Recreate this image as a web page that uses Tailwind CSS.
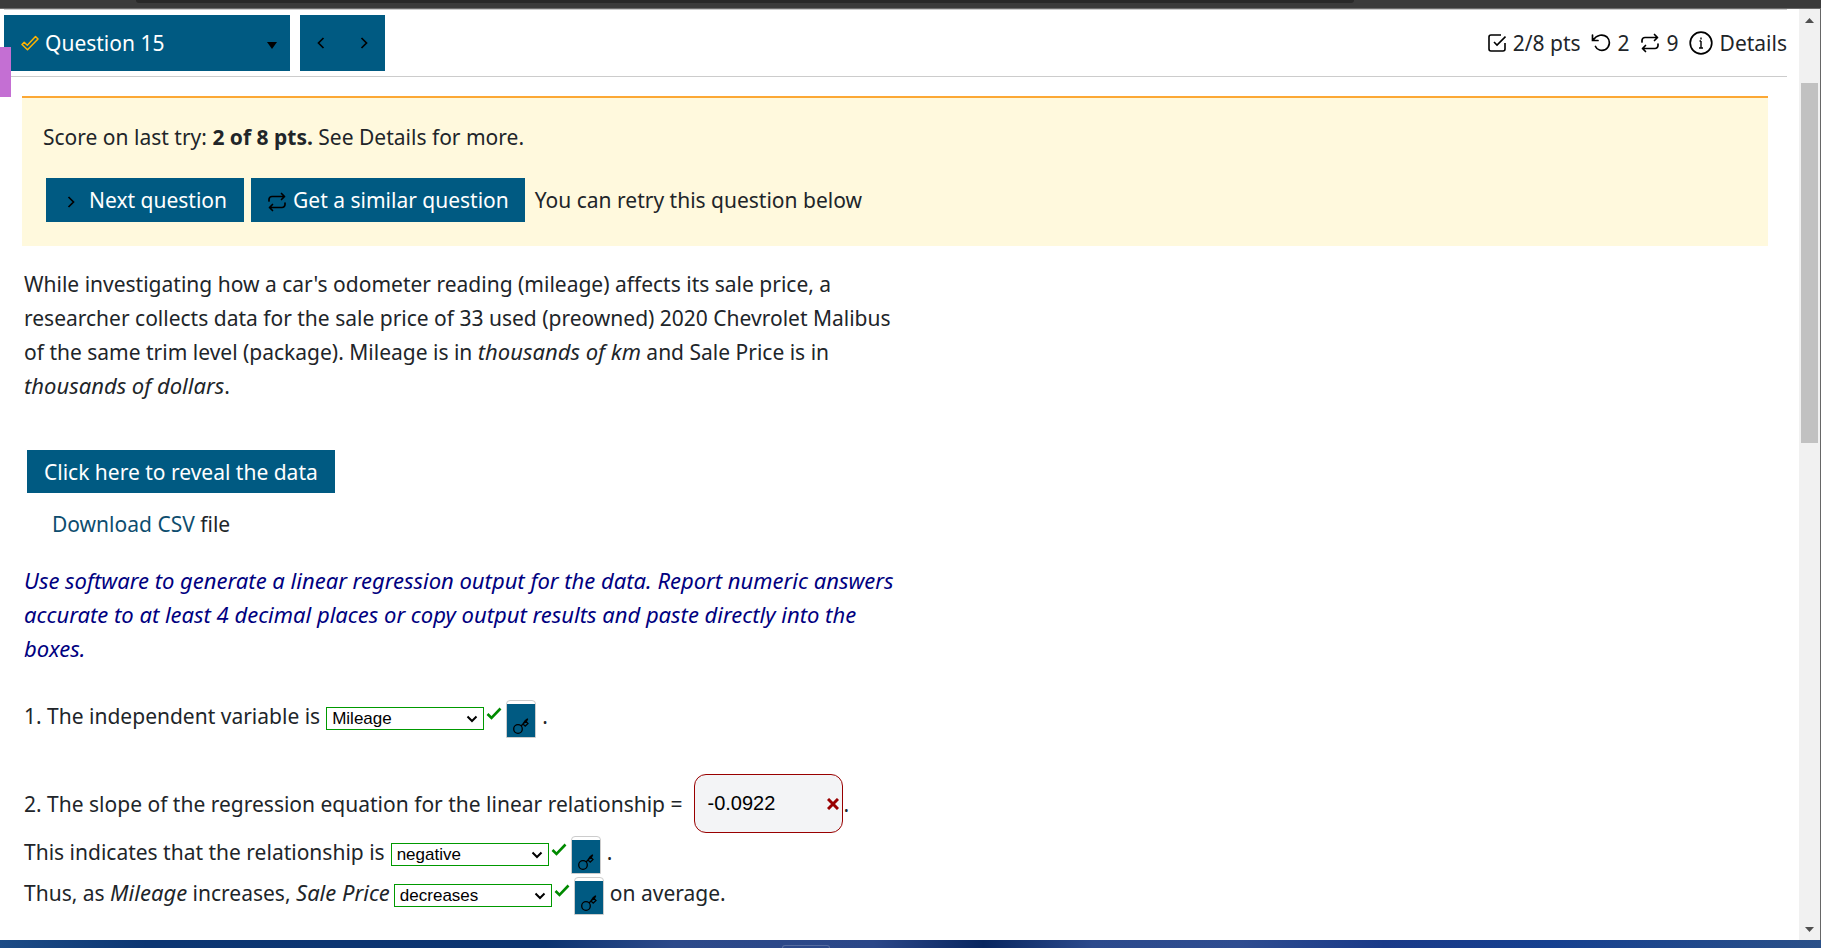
<!DOCTYPE html>
<html lang="en">
  <head>
    <meta charset="UTF-8" />
    <title>Question 15</title>
    <script src="https://cdn.jsdelivr.net/npm/@tailwindcss/browser@4"></script>
  </head>
  <body class="h-screen overflow-hidden flex flex-col bg-white text-[#212529] font-['Segoe_UI','Noto_Sans',sans-serif] text-[21px] leading-[34px]">
    <svg class="hidden">
      <symbol id="key" viewBox="0 0 18 18">
        <g fill="none" stroke="#000" stroke-width="1.3">
          <ellipse cx="6" cy="12" rx="4.300" ry="4.300" />
          <path d="M9 9 15.500 2.500M11 7l2.200 2.200 2.800-2.800-1.800-1.800 1.500-2.800-2.500 1.800z" />
        </g>
      </symbol>
      <symbol id="check" viewBox="0 0 16 14">
        <path d="M1.500 7 5.500 11 14.500 1.500" fill="none" stroke="#008a00" stroke-width="2.600" />
      </symbol>
      <symbol id="retry" viewBox="0 0 20 20">
        <g fill="none" stroke="#000" stroke-width="1.700" stroke-linecap="round" stroke-linejoin="round">
          <path d="M2 9V7.500a3 3 0 0 1 3-3h12.500M14.500 1.500l3 3-3 3" />
          <path d="M18 11v1.500a3 3 0 0 1-3 3H2.500M5.500 12.500l-3 3 3 3" />
        </g>
      </symbol>
      <symbol id="down" viewBox="0 0 12 8">
        <path d="m1.500 1.500 4.500 4.500 4.500-4.500" fill="none" stroke="#000" stroke-width="2" />
      </symbol>
    </svg>

    <div class="h-[9px] shrink-0 bg-[#3b3b3b] border-b border-[#6b6b6b]">
      <div class="ml-[136px] mr-[467px] h-[3px] rounded-b bg-[#292929]"></div>
    </div>

    <div class="flex-1 min-h-0 flex border-r border-[#666]">
      <main class="relative flex-1 min-w-0 overflow-hidden pl-1 pr-3">
        <div class="absolute left-0 top-[38px] w-[11px] h-[50px] bg-[#c46fd3]"></div>

        <header class="flex items-center h-[68px] border-y border-[#ccc] py-[3px]">
          <button class="flex items-center w-[286px] h-14 px-[17px] bg-[#005a82] text-white">
            <svg class="w-[18px] h-4" viewBox="0 0 18 16">
              <path d="M1 9.500 3.200 7.300 6.300 10.200 14.500 1.500 17 4 6.500 14.800z" fill="none" stroke="#ffb300" stroke-width="1.500" stroke-linejoin="round" />
            </svg>
            <span class="ml-[6px]">Question 15</span>
            <svg class="ml-auto -mr-1 mt-1 w-[10px] h-[7px]" viewBox="0 0 10 7"><path d="M0 0h10L5 7z" /></svg>
          </button>
          <nav class="ml-[10px] flex items-center h-14 w-[85px] px-[17px] justify-between bg-[#005a82]">
            <button aria-label="Previous question">
              <svg class="w-2 h-3" viewBox="0 0 8 12"><path d="M6.500 1 1.500 6l5 5" fill="none" stroke="#000" stroke-width="1.700" /></svg>
            </button>
            <button aria-label="Next">
              <svg class="w-2 h-3" viewBox="0 0 8 12"><path d="m1.500 1 5 5-5 5" fill="none" stroke="#000" stroke-width="1.700" /></svg>
            </button>
          </nav>
          <div class="ml-auto flex items-center">
            <svg class="w-[18px] h-[18px]" viewBox="0 0 18 18" fill="none" stroke="#000" stroke-width="1.600">
              <path d="M13 1H3a2 2 0 0 0-2 2v12a2 2 0 0 0 2 2h12a2 2 0 0 0 2-2V9" />
              <path d="m6 8 3 3 8.500-8.500" />
            </svg>
            <span class="ml-[7px]">2/8 pts</span>
            <svg class="ml-[10px] w-5 h-[18px]" viewBox="0 0 20 18" fill="none" stroke="#000" stroke-width="1.700" stroke-linecap="round">
              <path d="M1.500 1v5.500H7M1.800 6.300C6 .5 12-.3 16 3c4 4 2.500 10-1.500 12.500-4 2-8.500.5-10-3" />
            </svg>
            <span class="ml-[7px]">2</span>
            <svg class="ml-[10px] w-5 h-5"><use href="#retry" /></svg>
            <span class="ml-[7px]">9</span>
            <svg class="ml-[10px] w-6 h-6" viewBox="0 0 24 24">
              <circle cx="12" cy="12" r="10.800" fill="none" stroke="#000" stroke-width="1.700" />
              <path d="M12 10v7M12 6.500v2M10.500 10H12M10 17h4" stroke="#000" stroke-width="1.400" />
            </svg>
            <a href="#" class="ml-[7px]">Details</a>
          </div>
        </header>

        <section class="ml-[18px] mr-[19px] mt-[19px] h-[150px] border-t-2 border-[#fca834] bg-[#fff9dd] px-[21px] pt-[22px]">
          <p>Score on last try: <b>2 of 8 pts.</b> See Details for more.</p>
          <div class="mt-6 ml-[3px] flex items-center">
            <button class="flex items-center h-11 px-[17px] bg-[#005a82] text-white">
              <svg class="mx-1 mt-1 w-2 h-3" viewBox="0 0 8 12"><path d="m1.500 1 5 5-5 5" fill="none" stroke="#000" stroke-width="1.700" /></svg>
              <span class="ml-[10px]">Next question</span>
            </button>
            <button class="ml-[7px] flex items-center h-11 px-4 bg-[#005a82] text-white">
              <svg class="mt-1 w-5 h-5"><use href="#retry" /></svg>
              <span class="ml-[6px]">Get a similar question</span>
            </button>
            <span class="ml-[10px]">You can retry this question below</span>
          </div>
        </section>

        <section class="ml-5 mt-[21px]">
          <p class="max-w-[890px]">
            While investigating how a car's odometer reading (mileage) affects its sale price, a
            researcher collects data for the sale price of 33 used (preowned) 2020 Chevrolet Malibus
            of the same trim level (package). Mileage is in <i class="text-[22px] leading-none">thousands of km</i> and Sale Price is in
            <i class="text-[22px] leading-none">thousands of dollars</i>.
          </p>
          <button class="block mt-[47px] ml-[3px] h-[43px] px-[17px] bg-[#005a82] text-white">Click here to reveal the data</button>
          <p class="mt-[14px] ml-7"><a href="#" class="text-[#0d4d6e]">Download CSV</a> file</p>
          <p class="mt-[22px] max-w-[880px] italic text-[22px] leading-[34px] text-[#000080]">
            Use software to generate a linear regression output for the data. Report numeric answers
            accurate to at least 4 decimal places or copy output results and paste directly into the
            boxes.
          </p>

          <div class="mt-[34px] flex items-start">
            <label for="variable">1. The independent variable is</label>
            <span class="relative ml-[6px] mt-2">
              <select id="variable" class="block appearance-none w-[158px] h-[23px] pl-[5px] border border-[#009900] bg-white text-black font-['Liberation_Sans',sans-serif] text-[17px] leading-[21px]">
                <option>Mileage</option>
              </select>
              <svg class="absolute right-[6px] top-2 w-3 h-2 pointer-events-none"><use href="#down" /></svg>
            </span>
            <svg class="ml-[2px] mt-2 w-4 h-[14px]"><use href="#check" /></svg>
            <button aria-label="Show answer" class="ml-1 mt-[1px] w-[30px] h-[38px] pt-[3px] rounded-t border border-[#ccc] bg-white">
              <span class="flex h-full items-end justify-center pb-[2px] bg-[#005a82]"><svg class="w-[18px] h-[18px]"><use href="#key" /></svg></span>
            </button>
            <span class="ml-[6px]">.</span>
          </div>

          <div class="mt-9 flex items-center">
            <label for="slope">2. The slope of the regression equation for the linear relationship =</label>
            <span class="relative ml-3">
              <input id="slope" type="text" value="-0.0922" class="block w-[149px] h-[59px] pl-3 rounded-xl border border-[#990000] bg-[#f3f4f6] text-black font-['Liberation_Sans',sans-serif] text-[20px]" />
              <svg class="absolute right-1 top-6 w-3 h-3" viewBox="0 0 12 12"><path d="m1 1 10 10M11 1 1 11" stroke="#990000" stroke-width="3" /></svg>
            </span>
            <span>.</span>
          </div>

          <div class="mt-[2px] flex items-start">
            <label for="direction">This indicates that the relationship is</label>
            <span class="relative ml-[6px] mt-2">
              <select id="direction" class="block appearance-none w-[158px] h-[23px] pl-[5px] border border-[#009900] bg-white text-black font-['Liberation_Sans',sans-serif] text-[17px] leading-[21px]">
                <option>negative</option>
              </select>
              <svg class="absolute right-[6px] top-2 w-3 h-2 pointer-events-none"><use href="#down" /></svg>
            </span>
            <svg class="ml-[2px] mt-2 w-4 h-[14px]"><use href="#check" /></svg>
            <button aria-label="Show answer" class="ml-1 mt-[1px] w-[30px] h-[38px] pt-[3px] rounded-t border border-[#ccc] bg-white">
              <span class="flex h-full items-end justify-center pb-[2px] bg-[#005a82]"><svg class="w-[18px] h-[18px]"><use href="#key" /></svg></span>
            </button>
            <span class="ml-[6px]">.</span>
          </div>

          <div class="mt-[2px] flex items-start">
            <label for="change">Thus, as <i class="text-[22px] leading-none">Mileage</i> increases, <i class="text-[22px] leading-none">Sale Price</i></label>
            <span class="relative ml-1 mt-2">
              <select id="change" class="block appearance-none w-[158px] h-[23px] pl-[5px] border border-[#009900] bg-white text-black font-['Liberation_Sans',sans-serif] text-[17px] leading-[21px]">
                <option>decreases</option>
              </select>
              <svg class="absolute right-[6px] top-2 w-3 h-2 pointer-events-none"><use href="#down" /></svg>
            </span>
            <svg class="ml-[2px] mt-2 w-4 h-[14px]"><use href="#check" /></svg>
            <button aria-label="Show answer" class="ml-1 mt-[1px] w-[30px] h-[38px] pt-[3px] rounded-t border border-[#ccc] bg-white">
              <span class="flex h-full items-end justify-center pb-[2px] bg-[#005a82]"><svg class="w-[18px] h-[18px]"><use href="#key" /></svg></span>
            </button>
            <span class="ml-[6px]">on average.</span>
          </div>
        </section>
      </main>

      <!-- scrollbar -->
      <div class="flex flex-col items-center w-[21px] pt-[9px] pb-2 bg-[#f1f1f1]">
        <svg class="w-[9px] h-[5px]" viewBox="0 0 9 5"><path d="M0 5h9L4.500 0z" fill="#505050" /></svg>
        <div class="mt-[60px] w-[17px] h-[360px] bg-[#c1c1c1]"></div>
        <svg class="mt-auto w-[9px] h-[5px]" viewBox="0 0 9 5"><path d="M0 0h9L4.500 5z" fill="#505050" /></svg>
      </div>
    </div>

    <div class="h-2 shrink-0 flex justify-center bg-[linear-gradient(90deg,#1d4c86_0%,#0c3672_8%,#0c3470_30%,#2d4a8a_37%,#2b4788_48%,#08265f_54%,#2c4a8c_60%,#2f4d90_68%,#1a3a88_76%,#16408f_85%,#2b5088_100%)]">
      <div class="mt-[5px] mr-[210px] w-12 rounded-t border-t border-x border-white/20"></div>
    </div>
  </body>
</html>
